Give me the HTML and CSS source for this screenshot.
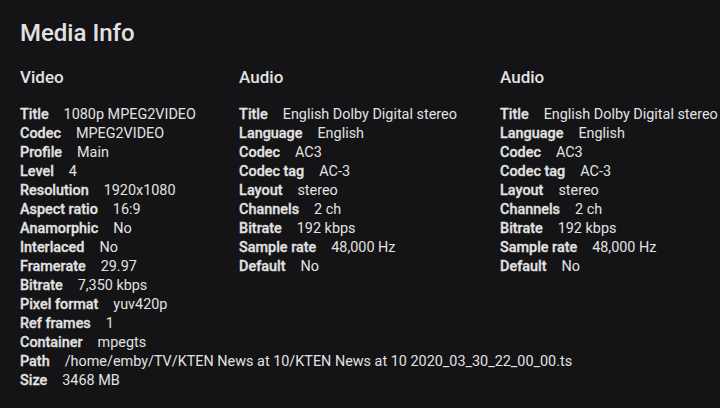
FILE: index.html
```html
<!DOCTYPE html>
<html lang="en">
  <head>
    <meta charset="UTF-8" />
    <title>Media Info</title>
    <link rel="stylesheet" href="styles.css">
  </head>
  <body>
    <div class="media-info">
      <h1 class="title">Media Info</h1>

      <div class="streams">
        <div class="stream">
          <h2>Video</h2>
          <div class="row"><span class="label">Title</span>1080p MPEG2VIDEO</div>
          <div class="row"><span class="label">Codec</span>MPEG2VIDEO</div>
          <div class="row"><span class="label">Profile</span>Main</div>
          <div class="row"><span class="label">Level</span>4</div>
          <div class="row"><span class="label">Resolution</span>1920x1080</div>
          <div class="row"><span class="label">Aspect ratio</span>16:9</div>
          <div class="row"><span class="label">Anamorphic</span>No</div>
          <div class="row"><span class="label">Interlaced</span>No</div>
          <div class="row"><span class="label">Framerate</span>29.97</div>
          <div class="row"><span class="label">Bitrate</span>7,350 kbps</div>
          <div class="row"><span class="label">Pixel format</span>yuv420p</div>
          <div class="row"><span class="label">Ref frames</span>1</div>
        </div>

        <div class="stream">
          <h2>Audio</h2>
          <div class="row"><span class="label">Title</span>English Dolby Digital stereo</div>
          <div class="row"><span class="label">Language</span>English</div>
          <div class="row"><span class="label">Codec</span>AC3</div>
          <div class="row"><span class="label">Codec tag</span>AC-3</div>
          <div class="row"><span class="label">Layout</span>stereo</div>
          <div class="row"><span class="label">Channels</span>2 ch</div>
          <div class="row"><span class="label">Bitrate</span>192 kbps</div>
          <div class="row"><span class="label">Sample rate</span>48,000 Hz</div>
          <div class="row"><span class="label">Default</span>No</div>
        </div>

        <div class="stream">
          <h2>Audio</h2>
          <div class="row"><span class="label">Title</span>English Dolby Digital stereo</div>
          <div class="row"><span class="label">Language</span>English</div>
          <div class="row"><span class="label">Codec</span>AC3</div>
          <div class="row"><span class="label">Codec tag</span>AC-3</div>
          <div class="row"><span class="label">Layout</span>stereo</div>
          <div class="row"><span class="label">Channels</span>2 ch</div>
          <div class="row"><span class="label">Bitrate</span>192 kbps</div>
          <div class="row"><span class="label">Sample rate</span>48,000 Hz</div>
          <div class="row"><span class="label">Default</span>No</div>
        </div>
      </div>

      <div class="file-info">
        <div class="row"><span class="label">Container</span>mpegts</div>
        <div class="row"><span class="label">Path</span>/home/emby/TV/KTEN News at 10/KTEN News at 10 2020_03_30_22_00_00.ts</div>
        <div class="row"><span class="label">Size</span>3468 MB</div>
      </div>
    </div>
  </body>
</html>
```

FILE: styles.css
```css
/* page */
body {
  margin: 0;
  background-color: #141416;
  color: #e2e2e2;
  font-family: Roboto, "Noto Sans", sans-serif;
  overflow: hidden;
}

.media-info {
  padding: 15px 20px 0 20px;
}

.title {
  font-size: 24px;
  font-weight: 500;
  margin: 0 0 14px 0;
  line-height: 36px;
}

.streams {
  display: flex;
  flex-wrap: nowrap;
}

.stream {
  flex: none;
  margin-right: 3em;
  font-size: 14.4px;
}

.stream h2 {
  font-size: 17px;
  font-weight: 500;
  margin: 0 0 16px 0;
  line-height: 24px;
}

.row {
  font-size: 14.4px;
  line-height: 19px;
  white-space: nowrap;
}

.label {
  font-weight: 500;
  margin-right: 15px;
  -webkit-text-stroke: 0.3px currentColor;
}
```
